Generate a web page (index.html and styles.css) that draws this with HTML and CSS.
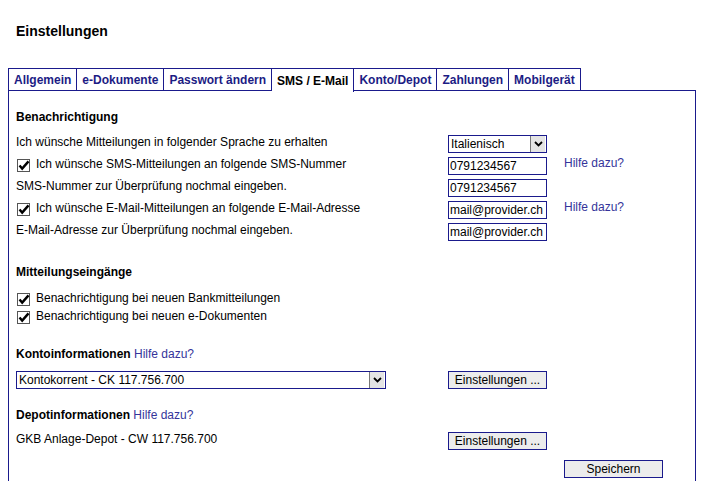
FILE: index.html
```html
<!DOCTYPE html>
<html lang="de">
<head>
<meta charset="utf-8">
<title>Einstellungen</title>
<link rel="stylesheet" href="styles.css">
</head>
<body>
<div class="page">
  <h1 class="title">Einstellungen</h1>
  <div class="tabs">
    <span class="tab">Allgemein</span>
    <span class="tab">e-Dokumente</span>
    <span class="tab">Passwort ändern</span>
    <span class="tab active">SMS / E-Mail</span>
    <span class="tab">Konto/Depot</span>
    <span class="tab">Zahlungen</span>
    <span class="tab">Mobilgerät</span>
  </div>
  <div class="panel">
    <h2 class="heading first">Benachrichtigung</h2>
    <div class="frow">
      <div class="flabel">Ich wünsche Mitteilungen in folgender Sprache zu erhalten</div>
      <div class="fctl">
        <div class="select small"><span class="sel-text">Italienisch</span><span class="sel-arrow"><svg width="9" height="6" viewBox="0 0 9 6"><path d="M1 1 L4.5 4.5 L8 1" fill="none" stroke="#000" stroke-width="1.8"/></svg></span></div>
      </div>
    </div>
    <div class="frow">
      <div class="flabel"><span class="cb"><svg width="13" height="13" viewBox="0 0 13 13"><path d="M2.5 6.5 L5.2 9.6 L11.5 2.4" fill="none" stroke="#000" stroke-width="2.4"/></svg></span>Ich wünsche SMS-Mitteilungen an folgende SMS-Nummer</div>
      <div class="fctl"><input class="inp" type="text" value="0791234567"></div>
      <a class="help" href="#">Hilfe dazu?</a>
    </div>
    <div class="frow">
      <div class="flabel">SMS-Nummer zur Überprüfung nochmal eingeben.</div>
      <div class="fctl"><input class="inp" type="text" value="0791234567"></div>
    </div>
    <div class="frow">
      <div class="flabel"><span class="cb"><svg width="13" height="13" viewBox="0 0 13 13"><path d="M2.5 6.5 L5.2 9.6 L11.5 2.4" fill="none" stroke="#000" stroke-width="2.4"/></svg></span>Ich wünsche E-Mail-Mitteilungen an folgende E-Mail-Adresse</div>
      <div class="fctl"><input class="inp" type="text" value="mail@provider.ch"></div>
      <a class="help" href="#">Hilfe dazu?</a>
    </div>
    <div class="frow">
      <div class="flabel">E-Mail-Adresse zur Überprüfung nochmal eingeben.</div>
      <div class="fctl"><input class="inp" type="text" value="mail@provider.ch"></div>
    </div>

    <h2 class="heading sec2">Mitteilungseingänge</h2>
    <div class="crow"><span class="cb"><svg width="13" height="13" viewBox="0 0 13 13"><path d="M2.5 6.5 L5.2 9.6 L11.5 2.4" fill="none" stroke="#000" stroke-width="2.4"/></svg></span>Benachrichtigung bei neuen Bankmitteilungen</div>
    <div class="crow"><span class="cb"><svg width="13" height="13" viewBox="0 0 13 13"><path d="M2.5 6.5 L5.2 9.6 L11.5 2.4" fill="none" stroke="#000" stroke-width="2.4"/></svg></span>Benachrichtigung bei neuen e-Dokumenten</div>

    <h2 class="heading sec3">Kontoinformationen <a class="help inline" href="#">Hilfe dazu?</a></h2>
    <div class="brow">
      <div class="wide">
        <div class="select large"><span class="sel-text">Kontokorrent - CK 117.756.700</span><span class="sel-arrow"><svg width="9" height="6" viewBox="0 0 9 6"><path d="M1 1 L4.5 4.5 L8 1" fill="none" stroke="#000" stroke-width="1.8"/></svg></span></div>
      </div>
      <button class="btn" type="button">Einstellungen ...</button>
    </div>

    <h2 class="heading sec4">Depotinformationen <a class="help inline" href="#">Hilfe dazu?</a></h2>
    <div class="frow">
      <div class="flabel">GKB Anlage-Depot - CW 117.756.700</div>
      <div class="fctl"><button class="btn" type="button">Einstellungen ...</button></div>
    </div>
    <div class="save-row">
      <button class="btn" type="button">Speichern</button>
    </div>
  </div>
</div>
</body>
</html>
```

FILE: styles.css
```css
html, body {
  margin: 0;
  padding: 0;
  background: #fff;
}
body {
  font-family: "Liberation Sans", Arial, sans-serif;
  font-size: 12px;
  color: #000;
}
.page {
  padding: 0 8px;
}
.title {
  margin: 0;
  padding: 23px 8px 0;
  height: 68px;
  box-sizing: border-box;
  font-size: 14px;
  line-height: 16px;
  font-weight: bold;
  color: #000;
}
.tabs {
  display: flex;
  height: 23px;
  position: relative;
  z-index: 1;
}
.tab {
  display: flex;
  align-items: center;
  padding: 0 5px;
  height: 22px;
  border: 1px solid #1a1a8c;
  border-left: none;
  border-bottom: none;
  font-weight: bold;
  color: #1c1c84;
  background: #fff;
}
.tab:first-child {
  border-left: 1px solid #1a1a8c;
}
.tab.active {
  color: #000;
  height: 23px;
}
.tabs .tab:not(.active) {
  border-bottom: 1px solid #1a1a8c;
  box-sizing: content-box;
  height: 21px;
}
.panel {
  margin-top: -1px;
  border: 1px solid #1a1a8c;
  border-bottom: none;
  padding: 18px 7px 3px;
}
.heading {
  margin: 0;
  font-size: 12px;
  line-height: 16px;
  font-weight: bold;
}
.heading.first { margin-bottom: 8px; }
.heading.sec2 { margin-top: 21px; margin-bottom: 9px; }
.heading.sec3 { margin-top: 21px; margin-bottom: 7px; }
.heading.sec4 { margin-top: 16px; margin-bottom: 7px; }

.frow {
  display: flex;
  height: 22px;
}
.flabel {
  width: 432px;
  padding-top: 1px;
  line-height: 16px;
  height: 16px;
  display: flex;
  align-items: center;
}
.fctl {
  width: 99px;
  padding-top: 2px;
}
.help {
  margin-left: 17px;
  margin-top: 0;
  line-height: 16px;
  color: #34349a;
  text-decoration: none;
}
.help.inline {
  margin: 0;
  font-weight: normal;
}
.cb {
  display: inline-flex;
  width: 13px;
  height: 13px;
  box-sizing: border-box;
  border: 1px solid #555;
  margin: 2px 6px 0 1px;
  flex: none;
  position: relative;
}
.cb svg {
  position: absolute;
  left: -1px;
  top: -1px;
}
.inp {
  display: block;
  box-sizing: border-box;
  width: 99px;
  height: 18px;
  margin: 0;
  padding: 0 1px;
  border: 1px solid #1a1a8c;
  font-family: "Liberation Sans", Arial, sans-serif;
  font-size: 12px;
  color: #000;
  background: #fff;
  outline: none;
}
.select {
  display: flex;
  box-sizing: border-box;
  height: 18px;
  border: 1px solid #1a1a8c;
  background: #fff;
  align-items: stretch;
}
.select.small { width: 99px; }
.select.large { width: 370px; }
.sel-text {
  flex: 1;
  padding-left: 2px;
  line-height: 16px;
  white-space: nowrap;
  overflow: hidden;
}
.sel-arrow {
  width: 14px;
  margin: 0 1px 0 0;
  border-left: 1px solid #777;
  background: #e4e4e4;
  display: flex;
  align-items: center;
  justify-content: center;
}
.crow {
  display: flex;
  align-items: center;
  height: 18px;
  line-height: 16px;
}
.crow .cb {
  margin-top: 3px;
}
.brow {
  display: flex;
  height: 22px;
  padding-top: 2px;
  box-sizing: border-box;
}
.wide {
  width: 432px;
}
.btn {
  display: block;
  box-sizing: border-box;
  width: 99px;
  height: 18px;
  margin: 0;
  padding: 0;
  border: 1px solid #1a1a8c;
  background: #ececec;
  font-family: "Liberation Sans", Arial, sans-serif;
  font-size: 12px;
  line-height: 16px;
  color: #000;
  text-align: center;
}
.save-row {
  padding-top: 8px;
  padding-left: 548px;
}
```
